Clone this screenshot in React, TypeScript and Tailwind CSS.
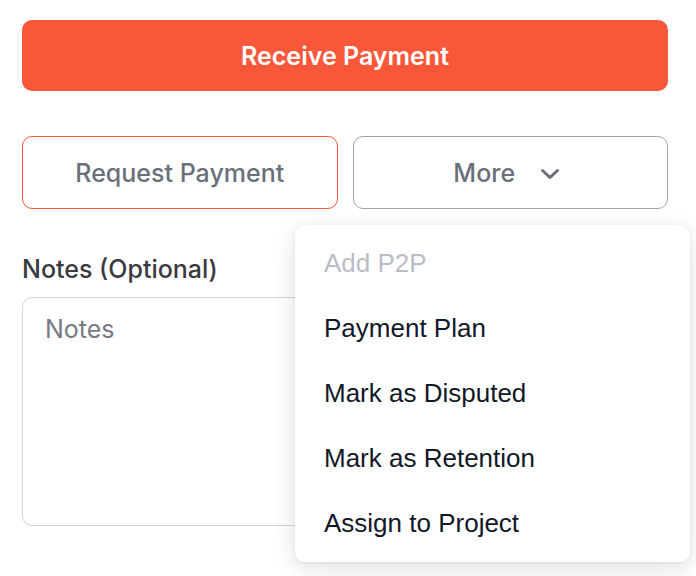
const menuItems = [
  { label: "Add P2P", disabled: true },
  { label: "Payment Plan" },
  { label: "Mark as Disputed" },
  { label: "Mark as Retention" },
  { label: "Assign to Project" },
];

function Chevron() {
  return (
    <svg width="20" height="12" viewBox="0 0 20 12" fill="none" className="shrink-0">
      <polyline
        points="2.5,2.5 10,9.5 17.5,2.5"
        stroke="currentColor"
        strokeWidth="3"
        strokeLinecap="round"
        strokeLinejoin="round"
      />
    </svg>
  );
}

function ActionMenu() {
  return (
    <div className="absolute left-[295px] top-[225px] w-[395px] rounded-[10px] bg-white py-[6px] shadow-[0_6px_24px_rgba(0,0,0,0.12),0_1px_4px_rgba(0,0,0,0.06)] font-['Liberation_Sans',Arial,sans-serif]">
      {menuItems.map((item) => (
        <div
          key={item.label}
          className={
            "flex h-[65px] items-center px-[29px] text-[26px] " +
            (item.disabled ? "text-[#b8bdc6]" : "text-[#111827]")
          }
        >
          {item.label}
        </div>
      ))}
    </div>
  );
}

export default function App() {
  return (
    <div className="relative h-[576px] w-[696px] overflow-hidden bg-white pl-[22px] pr-[28px] pt-[20px] font-['Inter',sans-serif]">
      <button className="flex h-[71px] w-full items-center justify-center rounded-[10px] bg-[#f9573a] pt-[2px] text-[25px] font-semibold text-white">
        Receive Payment
      </button>

      <div className="mt-[45px] grid grid-cols-2 gap-[15px]">
        <button className="flex h-[73px] items-center justify-center rounded-[10px] border border-[#f9573a] bg-white pt-[2px] text-[25px] font-medium text-[#6b6f7a]">
          Request Payment
        </button>
        <button className="flex h-[73px] items-center justify-center gap-[25px] rounded-[10px] border border-[#a3a3ab] bg-white pr-[7px] pt-[2px] text-[25px] font-medium text-[#6b6f7a]">
          <span>More</span>
          <Chevron />
        </button>
      </div>

      <div className="mt-[46px] text-[25px] leading-[28px] font-medium text-[#3a3a40]">
        Notes (Optional)
      </div>
      <div className="mt-[14px] h-[229px] w-full rounded-[10px] border border-[#d4d4d8] px-[22px] pt-[13px] text-[25px] leading-[36px] text-[#777a84]">
        Notes
      </div>

      <ActionMenu />
    </div>
  );
}
